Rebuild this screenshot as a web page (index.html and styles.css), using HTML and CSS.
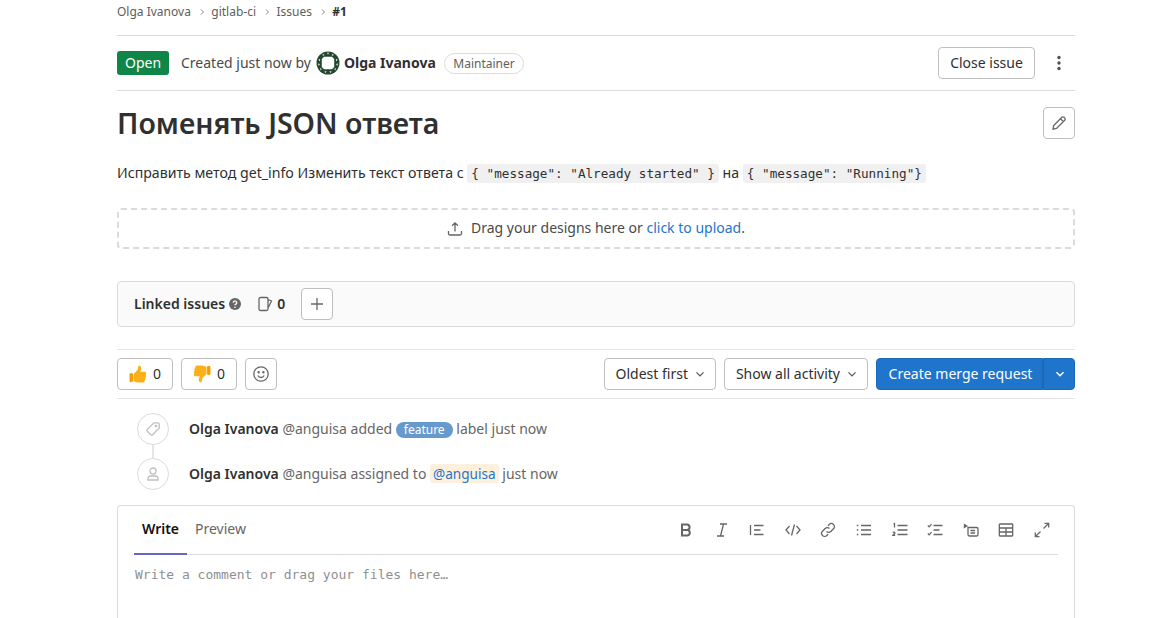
FILE: index.html
```html
<!DOCTYPE html>
<html lang="en">
<head>
<meta charset="utf-8">
<title>Issue #1</title>
<link rel="stylesheet" href="styles.css">
</head>
<body>
<main class="page">
  <nav class="crumbs">
    <span>Olga Ivanova</span><svg class="crumb-sep" viewBox="0 0 8 8"><path d="M3 1.500 5.500 4 3 6.500"/></svg>
    <span>gitlab-ci</span><svg class="crumb-sep" viewBox="0 0 8 8"><path d="M3 1.500 5.500 4 3 6.500"/></svg>
    <span>Issues</span><svg class="crumb-sep" viewBox="0 0 8 8"><path d="M3 1.500 5.500 4 3 6.500"/></svg>
    <strong>#1</strong>
  </nav>

  <header class="issue-head">
    <span class="status">Open</span>
    <span class="created">Created just now by</span>
    <svg class="avatar" viewBox="0 0 24 24">
      <circle cx="12" cy="12" r="11.500" fill="#24482f"/>
      <path fill="#fff" d="M8 5.800h8l2.200 2.200v8L16 18.200H8L5.800 16V8z"/>
      <g fill="#fff"><path d="M6.500 3.200 8.500 3.500 7 5zM17.500 3.200 15.500 3.500 17 5zM11 1.800h2L12 3.500zM2.500 8.500 4.200 8 3.500 10.500zM21.500 8.500 19.800 8 20.500 10.500zM2 12.500l1.800.5L2.800 15zM22 12.500l-1.800.5L21.200 15zM4 17l1.700 1-1 1.500zM20 17l-1.700 1 1 1.500zM8.500 20.200l2.200.3L9.300 22zM15.500 20.200l-2.200.3L14.700 22z"/></g>
    </svg>
    <strong class="author">Olga Ivanova</strong>
    <span class="role">Maintainer</span>
    <button class="btn close-btn">Close issue</button>
    <svg class="kebab" viewBox="0 0 4 16"><circle cx="2" cy="2.500" r="1.700"/><circle cx="2" cy="8" r="1.700"/><circle cx="2" cy="13.500" r="1.700"/></svg>
  </header>

  <div class="title-row">
    <h1>Поменять JSON ответа</h1>
    <button class="btn icon-btn" aria-label="Edit">
      <svg class="ico" viewBox="0 0 16 16"><path d="M10.800 2.300a1.600 1.600 0 0 1 2.300 0l.6.600a1.600 1.600 0 0 1 0 2.300L5.500 13.400l-3.500.7.700-3.500zM9.500 3.700l2.900 2.900"/></svg>
    </button>
  </div>

  <p class="desc">Исправить метод get_info Изменить текст ответа с <code>{ "message": "Already started" }</code> на <code>{ "message": "Running"}</code></p>

  <div class="drop">
    <svg class="ico" viewBox="0 0 16 16"><path d="M8 10.500V2M5 4.800 8 1.800l3 3M1.500 10v2.500a1.500 1.500 0 0 0 1.500 1.500h10a1.500 1.500 0 0 0 1.500-1.500V10"/></svg>
    <span class="drop-text">Drag your designs here or <a>click to upload</a>.</span>
  </div>

  <section class="linked">
    <strong>Linked issues</strong>
    <svg class="help" viewBox="0 0 16 16"><circle cx="8" cy="8" r="8" fill="#666"/><path d="M5.700 6.200a2.300 2.300 0 1 1 3.500 2c-.8.500-1.200.8-1.200 1.600" fill="none" stroke="#fff" stroke-width="1.700"/><circle cx="8" cy="12.300" r="1.100" fill="#fff"/></svg>
    <svg class="ico issue-ico" viewBox="0 0 16 16"><path d="M3.500 1.500h6a1.500 1.500 0 0 1 1.500 1.500v10a1.500 1.500 0 0 1-1.500 1.500h-6A1.500 1.500 0 0 1 2 13V3a1.500 1.500 0 0 1 1.500-1.500zM11 3.500l3.500 1.500-3.500 7"/></svg>
    <span class="count">0</span>
    <button class="btn icon-btn" aria-label="Add">
      <svg class="ico" viewBox="0 0 16 16"><path d="M8 2v12M2 8h12"/></svg>
    </button>
  </section>

  <div class="actions">
    <button class="btn award"><span class="emoji">
      <svg viewBox="0 0 18 18"><path fill="#f59e0b" d="M.5 9.500c0-1 .8-1.500 1.700-1.500s1.800.5 1.800 1.500v6c0 1-.8 1.800-1.800 1.800S.5 16.500.5 15.500z"/><path fill="#fbb017" d="M4.500 9 8 5.500c1-1.200 1.200-2.800 1.200-4 0-1.300 2.800-1.300 3 1.200.1 1.400-.5 3-1 4h4.300c2 0 2.200 2.600.9 3 1.200.7 1 2.500-.2 2.800.8.800.4 2.300-.6 2.500.4 1 0 2.500-1.600 2.500H9c-2 0-3-1-4.500-1.200z"/></svg></span>0</button>
    <button class="btn award"><span class="emoji">
      <svg viewBox="0 0 18 18"><path fill="#f59e0b" d="M17.500 8.500c0 1-.8 1.500-1.700 1.500s-1.800-.5-1.800-1.500v-6c0-1 .8-1.800 1.800-1.800s1.700.8 1.700 1.800z"/><path fill="#fbb017" d="M13.500 9 10 12.500c-1 1.200-1.200 2.800-1.200 4 0 1.300-2.800 1.300-3-1.200-.1-1.400.5-3 1-4H2.500c-2 0-2.200-2.600-.9-3-1.200-.7-1-2.500.2-2.800-.8-.8-.4-2.300.6-2.500C2 2 2.400.5 4 .5h5c2 0 3 1 4.500 1.200z"/></svg></span>0</button>
    <button class="btn icon-btn" aria-label="Add reaction">
      <svg class="ico" viewBox="0 0 16 16"><circle cx="8" cy="8" r="7.200"/><path d="M4.800 9.500c.8 1.400 1.900 2 3.200 2s2.400-.6 3.200-2"/><circle cx="5.600" cy="6.200" r=".6"/><circle cx="10.400" cy="6.200" r=".6"/></svg>
    </button>
    <div class="spacer"></div>
    <button class="btn drop-btn">Oldest first<svg class="chev" viewBox="0 0 10 10"><path d="M1.500 3.300 5 6.800l3.500-3.500"/></svg></button>
    <button class="btn drop-btn">Show all activity<svg class="chev" viewBox="0 0 10 10"><path d="M1.500 3.300 5 6.800l3.500-3.500"/></svg></button>
    <div class="split">
      <button class="split-main">Create merge request</button>
      <button class="split-caret" aria-label="More"><svg class="chev" viewBox="0 0 10 10"><path d="M1.500 3.300 5 6.800l3.500-3.500"/></svg></button>
    </div>
  </div>

  <ul class="notes">
    <li class="note">
      <span class="note-ico"><svg class="ico" viewBox="0 0 16 16"><path d="M9 1.800h4a1.200 1.200 0 0 1 1.200 1.200v4L7.600 13.700a1.300 1.300 0 0 1-1.800 0l-3.500-3.500a1.300 1.300 0 0 1 0-1.800z"/><circle cx="11" cy="5" r=".7"/></svg></span>
      <span class="note-text"><strong>Olga Ivanova</strong> @anguisa added <span class="label">feature</span> label just now</span>
    </li>
    <li class="note">
      <span class="note-ico"><svg class="ico" viewBox="0 0 16 16"><circle cx="8" cy="5" r="3"/><path d="M3 14v-1.500A2.500 2.500 0 0 1 5.500 10h5a2.500 2.500 0 0 1 2.500 2.500V14z"/></svg></span>
      <span class="note-text"><strong>Olga Ivanova</strong> @anguisa assigned to <a class="mention">@anguisa</a> just now</span>
    </li>
  </ul>

  <section class="editor">
    <div class="editor-head">
      <div class="tabs"><span class="tab active">Write</span><span class="tab">Preview</span></div>
      <div class="tools">
        <svg class="tool" viewBox="0 0 16 16"><path class="thick" d="M4 2.500h4.800a2.700 2.700 0 0 1 0 5.500H4zM4 8h5.500a2.800 2.800 0 0 1 0 5.500H4zM4 2v12"/></svg>
        <svg class="tool" viewBox="0 0 16 16"><path d="M6 2h7M3 14h7M9.500 2 6.500 14"/></svg>
        <svg class="tool" viewBox="0 0 16 16"><path d="M1.500 3v10M5 3.500h9.500M5 8h6.500M5 12.500h9.500"/></svg>
        <svg class="tool" viewBox="0 0 16 16"><path d="M4.500 4 1 8l3.500 4M11.500 4 15 8l-3.500 4M9.500 2.500l-3 11"/></svg>
        <svg class="tool" viewBox="0 0 16 16"><path d="M6.500 9.500a3 3 0 0 0 4.300 0l2.700-2.700a3 3 0 0 0-4.300-4.300L8 3.700M9.500 6.500a3 3 0 0 0-4.300 0l-2.700 2.700a3 3 0 0 0 4.300 4.300L8 12.300"/></svg>
        <svg class="tool" viewBox="0 0 16 16"><path d="M5 3.500h10M5 8h10M5 12.500h10M.8 3.500h1.500M.8 8h1.500M.8 12.500h1.500"/></svg>
        <svg class="tool" viewBox="0 0 16 16"><path d="M5.500 3.500h10M5.500 8h10M5.500 12.500h10M1.500 2l1-.5v4M.8 10.500c.8-.8 2.400-.5 2 .8l-2 2h2.400"/></svg>
        <svg class="tool" viewBox="0 0 16 16"><path d="M6.500 3.500h9M6.500 8h6M6.500 12.500h9M.8 3.500l1.400 1.400L4.500 2.200M.8 11.500l1.400 1.400 2.300-2.700"/></svg>
        <svg class="tool" viewBox="0 0 16 16"><path d="M5 5.500h8.500a1.500 1.500 0 0 1 1.500 1.500v5.500a1.500 1.500 0 0 1-1.500 1.500h-7A1.500 1.500 0 0 1 5 12.500zM7.500 8.500H12M7.500 11H12"/><path class="solid" d="M.8 1.500 5 4 .8 6.500z"/></svg>
        <svg class="tool" viewBox="0 0 16 16"><path d="M2 2h12a.7.7 0 0 1 .7.7v10.600a.7.7 0 0 1-.7.7H2a.7.7 0 0 1-.7-.7V2.700A.7.700 0 0 1 2 2zM1.300 6h13.400M1.300 10h13.400M8 6v8"/></svg>
        <svg class="tool" viewBox="0 0 16 16"><path d="M9.500 6.500 14.500 1.500M10.500 1.300h4.200v4.200M6.500 9.500l-5 5M1.300 10.500v4.200h4.200"/></svg>
      </div>
    </div>
    <div class="placeholder">Write a comment or drag your files here…</div>
  </section>
</main>
</body>
</html>
```
FILE: styles.css
```css
* { box-sizing: border-box; }
html, body { margin: 0; height: 618px; overflow: hidden; background: #fff; }
body { font-family: "Noto Sans", sans-serif; font-size: 14px; color: #303030; line-height: 20px; }
svg { display: block; flex: none; }
.page { width: 958px; margin-left: 117px; }

.ico { width: 16px; height: 16px; fill: none; stroke: #666; stroke-width: 1.300; }

.btn {
  font: inherit; color: #303030; background: #fff;
  border: 1px solid #bfbfbf; border-radius: 4px;
  height: 32px; display: inline-flex; align-items: center; justify-content: center;
  padding: 0 11px; flex: none;
}
.icon-btn { width: 32px; padding: 0; }

.crumbs { height: 36px; padding-bottom: 11px; border-bottom: 1px solid #dbdbdb; display: flex; align-items: center; font-size: 12px; color: #5e5e5e; line-height: 22px; }
.crumbs strong { color: #303030; font-weight: 700; }
.crumb-sep { width: 8px; height: 8px; margin: 0 5.400px 0 7px; fill: none; stroke: #8a8a8a; stroke-width: 1; }

.issue-head { height: 55px; border-bottom: 1px solid #dbdbdb; display: flex; align-items: center; }
.status { width: 52px; height: 24px; background: #108548; color: #fff; border-radius: 3px; text-align: center; line-height: 24px; margin-right: 12px; }
.created { margin-right: 5px; color: #4a4a4a; }
.avatar { width: 24px; height: 24px; margin-right: 4px; }
.author { font-weight: 700; margin-right: 8px; }
.role { height: 21px; border: 1px solid #dbdbdb; border-radius: 11px; font-size: 12px; line-height: 19px; padding: 0 8.500px; color: #5e5e5e; }
.close-btn { margin-left: auto; width: 97px; padding: 0; }
.kebab { width: 4px; height: 16px; fill: #525252; margin: 0 14px 0 22px; }

.title-row { display: flex; justify-content: space-between; padding-top: 16px; }
h1 { margin: -2px 0 0; font-size: 28.500px; line-height: 36px; font-weight: 600; color: #303030; }
.desc { margin: 18px 0 0; line-height: 28px; color: #303030; height: 28px; font-size: 14.160px; }
code { font-family: "DejaVu Sans Mono", monospace; font-size: 12.650px; background: #f0f0f0; border-radius: 3px; padding: 2px 4px; color: #303030; }

.drop { margin-top: 21px; height: 41px; border: 2px dashed #dbdbdb; border-radius: 4px; display: flex; align-items: center; justify-content: center; gap: 8px; color: #4a4a4a; }
.drop-text { margin-bottom: 2px; }
.drop a { color: #1f75cb; }

.linked { margin-top: 32px; height: 46px; border: 1px solid #dbdbdb; border-radius: 4px; background: #fafafa; display: flex; align-items: center; padding-left: 16px; }
.linked strong { font-weight: 600; color: #303030; }
.help { width: 12px; height: 12px; margin-left: 4px; }
.issue-ico { margin-left: 16px; }
.count { margin-left: 4px; font-weight: 600; }
.linked .icon-btn { margin-left: 16px; }

.actions { margin-top: 22px; height: 50px; border-top: 1px solid #e5e5e5; border-bottom: 1px solid #e5e5e5; display: flex; align-items: center; gap: 8px; }
.spacer { flex: 1; }
.award { width: 56px; padding: 0; gap: 6px; }
.emoji svg { width: 18px; height: 18px; }
.chev { width: 10px; height: 10px; fill: none; stroke: #555; stroke-width: 1.200; margin-left: 7px; }
.drop-btn { padding: 0 10px 0 11px; }
.split { display: flex; height: 32px; flex: none; }
.split button { font: inherit; color: #fff; background: #1f75cb; border: 1px solid #1b69b6; height: 32px; }
.split-main { width: 167px; padding: 0 0 0 2px; border-radius: 4px 0 0 4px; }
.split-caret { width: 32px; padding: 0 0 0 1px; border-left: 0; border-radius: 0 4px 4px 0; display: flex; align-items: center; justify-content: center; }
.split-caret .chev { margin: 0; stroke: #fff; stroke-width: 1.500; }

.notes { list-style: none; margin: 0; padding: 0 0 0 20px; }
.note { height: 45px; display: flex; align-items: center; position: relative; }
.notes .note:first-child { margin-top: 7px; }
.note-ico { width: 32px; height: 32px; border: 1px solid #dbdbdb; border-radius: 50%; display: flex; align-items: center; justify-content: center; background: #fff; margin-right: 20px; position: relative; z-index: 1; }
.note-ico .ico { stroke: #bfbfbf; width: 16px; height: 16px; }
.notes .note:first-child::after { content: ""; position: absolute; left: 15px; top: 36px; height: 16px; width: 2px; background: #e5e5e5; }
.note-text { color: #666; }
.note-text strong { color: #303030; font-weight: 600; }
.label { display: inline-block; background: #6699cc; color: #fff; font-size: 12px; line-height: 16px; height: 16px; padding: 0 8px; border-radius: 8px; }
.mention { background: #fdf1dd; color: #1f75cb; border-radius: 3px; padding: 0 3px; font-size: 13.600px; }

.editor { margin-top: 9px; height: 130px; border: 1px solid #dbdbdb; border-radius: 4px 4px 0 0; border-bottom: 0; padding: 0 16px; }
.editor-head { height: 49px; border-bottom: 1px solid #dbdbdb; display: flex; justify-content: space-between; }
.tabs { display: flex; }
.tab { padding: 13px 8px 0; color: #666; height: 49px; width: 53px; }
.tab.active { color: #111; font-weight: 600; border-bottom: 2px solid #6666c4; text-align: center; padding-left: 0; padding-right: 0; }
.tab + .tab { width: auto; }
.tools { display: flex; align-items: flex-start; padding-top: 16px; gap: 19.600px; padding-right: 8px; }
.tool { width: 16px; height: 16px; fill: none; stroke: #666; stroke-width: 1.300; }
.tool .thick { stroke-width: 2; }
.tool .solid { fill: #666; stroke: none; }
.placeholder { font-family: "DejaVu Sans Mono", monospace; font-size: 13px; color: #8f8f8f; padding-top: 10px; padding-left: 1px; }
```
